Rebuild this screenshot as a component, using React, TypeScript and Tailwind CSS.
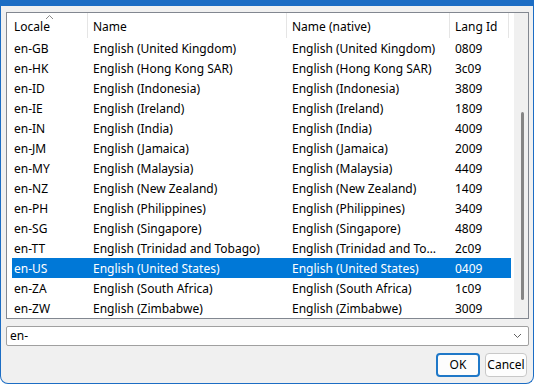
import React from "react"

interface Locale {
    code: string
    name: string
    native: string
    langId: string
}

const locales: Locale[] = [
    { code: "en-GB", name: "English (United Kingdom)", native: "English (United Kingdom)", langId: "0809" },
    { code: "en-HK", name: "English (Hong Kong SAR)", native: "English (Hong Kong SAR)", langId: "3c09" },
    { code: "en-ID", name: "English (Indonesia)", native: "English (Indonesia)", langId: "3809" },
    { code: "en-IE", name: "English (Ireland)", native: "English (Ireland)", langId: "1809" },
    { code: "en-IN", name: "English (India)", native: "English (India)", langId: "4009" },
    { code: "en-JM", name: "English (Jamaica)", native: "English (Jamaica)", langId: "2009" },
    { code: "en-MY", name: "English (Malaysia)", native: "English (Malaysia)", langId: "4409" },
    { code: "en-NZ", name: "English (New Zealand)", native: "English (New Zealand)", langId: "1409" },
    { code: "en-PH", name: "English (Philippines)", native: "English (Philippines)", langId: "3409" },
    { code: "en-SG", name: "English (Singapore)", native: "English (Singapore)", langId: "4809" },
    { code: "en-TT", name: "English (Trinidad and Tobago)", native: "English (Trinidad and Tobago)", langId: "2c09" },
    { code: "en-US", name: "English (United States)", native: "English (United States)", langId: "0409" },
    { code: "en-ZA", name: "English (South Africa)", native: "English (South Africa)", langId: "1c09" },
    { code: "en-ZW", name: "English (Zimbabwe)", native: "English (Zimbabwe)", langId: "3009" },
]

const selected = "en-US"

function HeaderCell({ label, width, pl, sorted }: { label: string; width: string; pl: string; sorted?: boolean }) {
    return (
        <div className={`${width} ${pl} relative h-full flex items-center border-r border-[#e5e5e5] shrink-0`}>
            {sorted && (
                <svg className="absolute left-[38px] top-[1px]" width="9" height="6" viewBox="0 0 9 6">
                    <path d="M1 5 L4.5 1.5 L8 5" fill="none" stroke="#8a8a8a" strokeWidth="1" />
                </svg>
            )}
            <span className="pt-[2px]">{label}</span>
        </div>
    )
}

export default function App() {
    return (
        <div
            className="w-[534px] h-[384px] flex flex-col bg-[#f0f0f0] text-[12px] text-black overflow-hidden rounded-b-[8px] border-x border-b border-[#1c6dc4]"
            style={{ fontFamily: '"Noto Sans", "DejaVu Sans", sans-serif' }}
        >
            <div className="h-[6px] bg-[#1c6dc4] shrink-0" />

            <div className="flex-1 flex flex-col pl-[5px] pr-[4px] pt-[6px] pb-[6px]">
                {/* list view */}
                <div className="h-[307px] border border-[#828790] bg-white flex shrink-0">
                    <div className="w-[504px] flex flex-col">
                        <div className="h-[25px] flex">
                            <HeaderCell label="Locale" width="w-[81px]" pl="pl-[7px]" sorted />
                            <HeaderCell label="Name" width="w-[199px]" pl="pl-[5px]" />
                            <HeaderCell label="Name (native)" width="w-[163px]" pl="pl-[5px]" />
                            <HeaderCell label="Lang Id" width="w-[59px]" pl="pl-[5px]" />
                        </div>
                        <ul className="flex flex-col">
                            {locales.map((l) => {
                                const isSel = l.code === selected
                                return (
                                    <li
                                        key={l.code}
                                        className={`ml-[5px] h-[20px] w-[499px] flex items-center pt-[2px] ${isSel ? "bg-[#0078d7] text-white" : ""}`}
                                    >
                                        <span className="w-[76px] pl-[2px] shrink-0">{l.code}</span>
                                        <span className="w-[199px] pl-[5px] shrink-0 truncate">{l.name}</span>
                                        <span className="w-[163px] pl-[5px] pr-[12px] shrink-0 truncate">{l.native}</span>
                                        <span className="w-[61px] pl-[5px] shrink-0">{l.langId}</span>
                                    </li>
                                )
                            })}
                        </ul>
                    </div>
                    {/* scrollbar */}
                    <div className="flex-1 flex">
                        <div className="w-[3px]" />
                        <div className="flex-1 bg-[#f0f0f0] relative">
                            <div className="absolute left-[7px] top-[99px] w-[3px] h-[188px] rounded-full bg-[#858585]" />
                        </div>
                    </div>
                </div>

                {/* combo */}
                <div className="mt-[7px] h-[20px] border border-[#a0a0a0] rounded-[2px] bg-white flex items-center pl-[3px] pr-[6px] shrink-0">
                    <span className="flex-1">en-</span>
                    <svg width="9" height="6" viewBox="0 0 9 6">
                        <path d="M1 1 L4.5 4.5 L8 1" fill="none" stroke="#606060" strokeWidth="1" />
                    </svg>
                </div>

                {/* buttons */}
                <div className="mt-[7px] flex justify-end gap-[5px] pr-[2px]">
                    <button className="w-[44px] h-[24px] rounded-[4px] border-2 border-[#1f78c8] bg-[#fdfdfd] flex items-center justify-center">
                        OK
                    </button>
                    <button className="w-[42px] h-[24px] rounded-[4px] border border-[#c8c8c8] bg-[#fdfdfd] flex items-center justify-center">
                        Cancel
                    </button>
                </div>
            </div>
        </div>
    )
}
